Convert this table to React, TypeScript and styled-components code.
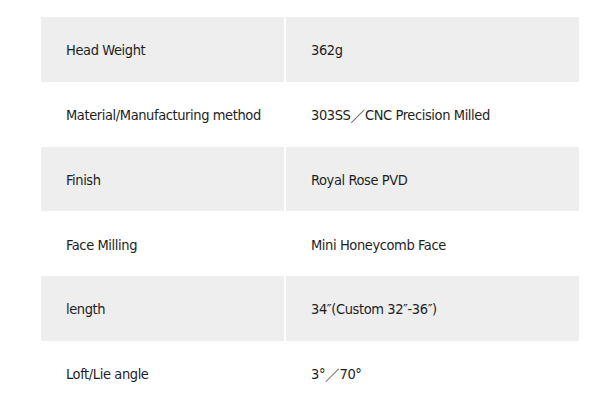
import { Fragment } from "react";
import styled, { createGlobalStyle } from "styled-components";

const GlobalStyle = createGlobalStyle`
  body {
    margin: 0;
    background: #fff;
    font-family: "DejaVu Sans Condensed", "DejaVu Sans", "Noto Sans CJK JP", sans-serif;
    font-stretch: condensed;
    color: #1e1e1e;
  }
`;

const Wrapper = styled.div`
  padding: 17px 18px 0 41px;
`;

const Table = styled.div`
  display: grid;
  grid-template-columns: 243px 293px;
  column-gap: 2px;
`;

const Cell = styled.div<{ $shaded: boolean }>`
  height: 64.75px;
  display: flex;
  align-items: center;
  padding: 2px 0 0 25px;
  box-sizing: border-box;
  background: ${(p) => (p.$shaded ? "#eeeeee" : "#ffffff")};
  font-size: 14.5px;
  letter-spacing: -0.4px;
  white-space: nowrap;
`;

const Slash = styled.span`
  font-family: "Noto Sans CJK JP", sans-serif;
  font-weight: 300;
  letter-spacing: 0;
`;

const specs: [string, React.ReactNode][] = [
  ["Head Weight", "362g"],
  [
    "Material/Manufacturing method",
    <>
      303SS<Slash>／</Slash>CNC Precision Milled
    </>,
  ],
  ["Finish", "Royal Rose PVD"],
  ["Face Milling", "Mini Honeycomb Face"],
  ["length", "34″(Custom 32″-36″)"],
  [
    "Loft/Lie angle",
    <>
      3°<Slash>／</Slash>70°
    </>,
  ],
];

const App = () => {
  return (
    <>
      <GlobalStyle />
      <Wrapper>
        <Table>
          {specs.map(([label, value], i) => (
            <Fragment key={i}>
              <Cell $shaded={i % 2 === 0}>{label}</Cell>
              <Cell $shaded={i % 2 === 0}>{value}</Cell>
            </Fragment>
          ))}
        </Table>
      </Wrapper>
    </>
  );
};

export default App;
